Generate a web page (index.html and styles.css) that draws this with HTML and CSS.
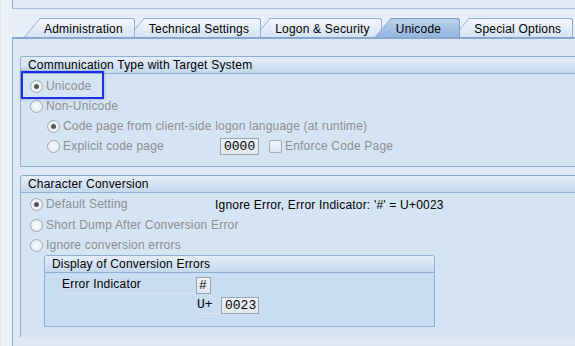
FILE: index.html
```html
<!DOCTYPE html>
<html lang="en">
<head>
    <meta charset="UTF-8">
    <meta name="viewport" content="width=device-width, initial-scale=1.0">
    <title>Unicode</title>
    <link rel="stylesheet" href="styles.css">
</head>
<body>
    <div class="screen">
        <div class="rail"></div>
        <div class="main">
            <div class="toolbar"></div>

            <div class="tabs">
                <div class="tab">Administration</div>
                <div class="tab">Technical Settings</div>
                <div class="tab">Logon &amp; Security</div>
                <div class="tab active">Unicode</div>
                <div class="tab">Special Options</div>
            </div>

            <div class="panel">
                <!-- communication type -->
                <div class="group">
                    <div class="group-title">Communication Type with Target System</div>
                    <div class="group-body">
                        <div class="row focus"><span class="radio on"></span>Unicode</div>
                        <div class="row"><span class="radio"></span>Non-Unicode</div>
                        <div class="row sub"><span class="radio on"></span>Code page from client-side logon language (at runtime)</div>
                        <div class="row sub">
                            <span class="radio"></span>
                            <span class="code-label">Explicit code page</span>
                            <span class="input code">0000</span>
                            <span class="check"></span>Enforce Code Page
                        </div>
                    </div>
                </div>

                <!-- character conversion -->
                <div class="group second">
                    <div class="group-title">Character Conversion</div>
                    <div class="group-body">
                        <div class="row">
                            <span class="field"><span class="radio on"></span>Default Setting</span>
                            <span class="info">Ignore Error, Error Indicator: '#' = U+0023</span>
                        </div>
                        <div class="row"><span class="radio"></span>Short Dump After Conversion Error</div>
                        <div class="row"><span class="radio"></span>Ignore conversion errors</div>

                        <div class="subgroup">
                            <div class="group-title">Display of Conversion Errors</div>
                            <div class="sub-body">
                                <div class="row plain">
                                    <span class="field name">Error Indicator</span>
                                    <span class="input hash">#</span>
                                </div>
                                <div class="row plain">
                                    <span class="spacer"></span>
                                    <span class="field unit">U+</span>
                                    <span class="input hex">0023</span>
                                </div>
                            </div>
                        </div>
                    </div>
                </div>
            </div>
        </div>
    </div>
</body>
</html>
```
FILE: styles.css
```css
*{
    box-sizing: border-box;
}

body{
    margin: 0;
    font-family: "Liberation Sans", Arial, sans-serif;
    font-size: 12px;
    letter-spacing: 0.2px;
    color: #000;
    background-color: #e9eff7;
}

.screen{
    display: flex;
    height: 346px;
    overflow: hidden;
}

.rail{
    width: 12px;
    flex: none;
    background: linear-gradient(to right, #dde3ec, #eef3f9 2px, #eaf0f7);
}

.main{
    flex: 1;
    min-width: 0;
    display: flex;
    flex-direction: column;
    background-color: #e8eff8;
}

.toolbar{
    height: 9px;
    flex: none;
    border-left: 1px solid #8eafd6;
    border-bottom: 1px solid #a6bfdd;
    background-color: #e2eaf5;
}

/* tab strip */
.tabs{
    display: flex;
    flex: none;
    height: 28px;
    padding: 9px 0 0 28px;
}

.tab{
    position: relative;
    height: 19px;
    margin-left: 9px;
    padding: 3px 11px 0 5px;
    line-height: 15px;
    white-space: nowrap;
    border-top: 1px solid #8fafd4;
    border-right: 1px solid #8fafd4;
    border-top-right-radius: 3px;
    background: linear-gradient(#f5f8fc, #d4e2f2);
}

.tab:first-child{
    margin-left: 0;
    padding-left: 4px;
}

.tab::before{
    content: "";
    position: absolute;
    z-index: -1;
    top: -1px;
    bottom: 0;
    left: -16px;
    width: 24px;
    background: inherit;
    border-top: 1px solid #8fafd4;
    border-left: 1px solid #8fafd4;
    transform: skewX(-40deg);
    transform-origin: bottom left;
}

.tab:nth-child(1){ z-index: 5; }
.tab:nth-child(2){ z-index: 4; }
.tab:nth-child(3){ z-index: 3; }
.tab:nth-child(5){ z-index: 1; }

.tab.active{
    z-index: 9;
    padding-right: 18px;
    border-color: #7c9fcb;
    background: linear-gradient(#bcd2ec, #94b5dd);
}

.tab.active::before{
    border-color: #7c9fcb;
}

/* content */
.panel{
    flex: 1;
    border-left: 1px solid #8eafd6;
    border-top: 2px solid #86a8d0;
    background-color: #dfe9f5;
    padding: 17px 0 0 7px;
}

.group{
    background-color: #d5e4f3;
    border: 1px solid #8eadd2;
    border-right: 0;
    border-top-left-radius: 3px;
}

.group.second{
    margin-top: 8px;
    border-bottom: 0;
}

.group-title{
    height: 17px;
    line-height: 17px;
    padding-left: 7px;
    border-bottom: 1px solid #8eadd2;
    border-top-left-radius: 2px;
    background: linear-gradient(#e5eef8, #c5d8ee);
}

.group-body{
    padding: 2px 0 10px;
}

.row{
    display: flex;
    align-items: center;
    height: 20px;
    padding-left: 7px;
    color: #8d8d8d;
    white-space: nowrap;
}

.row.sub{
    padding-left: 24px;
}

.focus{
    position: relative;
}

.focus::before{
    content: "";
    position: absolute;
    left: 0;
    top: -5px;
    width: 79px;
    height: 24px;
    border: 2px solid #1d2fe2;
    box-shadow: 0 0 3px rgba(30, 40, 120, 0.35);
}

.radio{
    position: relative;
    flex: none;
    width: 13px;
    height: 13px;
    margin: 0 3px 0 2px;
    border: 1px solid #a3a9b1;
    border-radius: 50%;
    background: radial-gradient(#fbfcfd, #e2e7ed);
}

.radio.on::after{
    content: "";
    position: absolute;
    left: 3px;
    top: 3px;
    width: 5px;
    height: 5px;
    border-radius: 50%;
    background-color: #555;
}

.code-label{
    width: 157px;
}

.input{
    display: inline-block;
    height: 17px;
    padding: 0 3px;
    font-family: "Liberation Mono", "Courier New", monospace;
    font-size: 13px;
    letter-spacing: 0;
    line-height: 15px;
    color: #000;
    border: 1px solid #9aa2ab;
    background: linear-gradient(#eef2f6, #e1e8ef);
}

.input.code{
    width: 39px;
}

.check{
    flex: none;
    width: 13px;
    height: 13px;
    margin: 0 3px 0 10px;
    border: 1px solid #a3a9b1;
    border-radius: 2px;
    background: linear-gradient(#f3f6f9, #dfe6ee);
}

.field{
    display: flex;
    align-items: center;
    align-self: flex-start;
    width: 184px;
    height: 19px;
    border-bottom: 1px solid #dfe5ec;
}

.info{
    margin-left: 3px;
    color: #000;
}

/* conversion errors box */
.subgroup{
    width: 391px;
    margin: 0 0 0 23px;
    border: 1px solid #8eadd2;
    border-radius: 3px 3px 0 0;
    background-color: #c9ddf2;
}

.subgroup .group-title{
    border-radius: 2px 2px 0 0;
}

.sub-body{
    padding: 2px 0 11px 15px;
}

.row.plain{
    padding-left: 0;
    color: #000;
}

.field.name{
    width: 136px;
    padding-left: 2px;
}

.field.unit{
    width: 25px;
    padding-left: 1px;
    font-family: "Liberation Mono", "Courier New", monospace;
    font-size: 13px;
    letter-spacing: 0;
}

.spacer{
    width: 136px;
    flex: none;
}

.input.hash{
    width: 15px;
    padding: 0 2px;
}

.input.hex{
    width: 38px;
}
```
